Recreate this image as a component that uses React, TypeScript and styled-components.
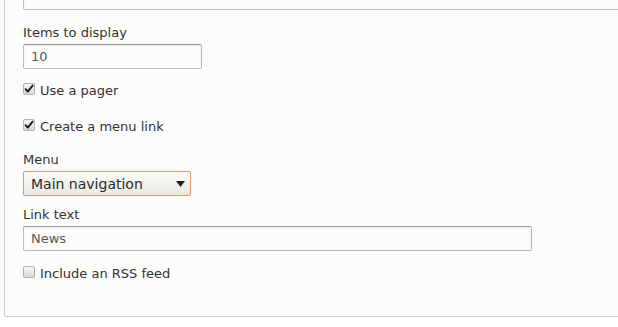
import React from "react";
import styled, { createGlobalStyle } from "styled-components";

const Global = createGlobalStyle`
  html, body { margin: 0; padding: 0; background: #ffffff; overflow: hidden; }
  body { font-family: "DejaVu Sans", Verdana, sans-serif; font-size: 13px; color: #333; }
`;

const Page = styled.div`
  width: 618px;
  height: 327px;
  overflow: hidden;
  padding-left: 4px;
  box-sizing: border-box;
`;

const Fieldset = styled.div`
  margin-top: -40px;
  width: 720px;
  box-sizing: border-box;
  border: 1px solid #cccccc;
  border-radius: 2px;
  background: #fcfcfa;
  padding: 24px 18px 33px 18px;
  display: flex;
  flex-direction: column;
  align-items: flex-start;
`;

const Label = styled.label<{ $mt: number }>`
  display: block;
  margin-top: ${(p) => p.$mt}px;
  line-height: 18px;
  font-size: 13px;
  color: #333;
`;

const TextInput = styled.input<{ $w: number; $mt: number }>`
  box-sizing: border-box;
  width: ${(p) => p.$w}px;
  height: 25px;
  margin: ${(p) => p.$mt}px 0 0 0;
  padding: 0 7px;
  border: 1px solid #b8b8b8;
  border-top-color: #999999;
  border-radius: 2px;
  background: #fcfcfa;
  box-shadow: inset 0 1px 2px rgba(0, 0, 0, 0.08);
  font-family: "DejaVu Sans", Verdana, sans-serif;
  font-size: 13px;
  color: #595959;
  outline: none;
`;

const CheckRow = styled.div<{ $mt: number }>`
  display: flex;
  align-items: flex-start;
  gap: 5px;
  margin-top: ${(p) => p.$mt}px;
  line-height: 18px;
`;

const BoxWrap = styled.span`
  position: relative;
  display: inline-block;
  width: 12px;
  height: 12px;
  margin-top: 1px;
`;

const Box = styled.input`
  appearance: none;
  -webkit-appearance: none;
  margin: 0;
  box-sizing: border-box;
  width: 12px;
  height: 12px;
  border: 1px solid #b4b4b4;
  border-radius: 2px;
  background: linear-gradient(#f4f4f4, #d9d9d9);
  display: block;
`;

const Tick = styled.svg`
  position: absolute;
  left: 1px;
  top: 1px;
  width: 10px;
  height: 10px;
  pointer-events: none;
`;

const CheckText = styled.label`
  font-size: 13px;
  color: #333;
`;

const SelectBox = styled.div`
  box-sizing: border-box;
  margin-top: 2px;
  width: 168px;
  height: 25px;
  border: 1px solid #e39a74;
  border-radius: 2px;
  box-shadow: 0 0 1px 0 rgba(230, 150, 110, 0.5);
  background: linear-gradient(#fbfbf9, #e9e9e1);
  display: flex;
  align-items: center;
  justify-content: space-between;
  padding: 0 5px 0 7px;
  font-size: 14px;
  color: #2a2a2a;
`;

const Arrow = styled.svg`
  width: 9px;
  height: 6px;
  margin-top: 1px;
`;

function Check({ label, checked }: { label: string; checked: boolean }) {
  return (
    <>
      <BoxWrap>
        <Box type="checkbox" defaultChecked={checked} />
        {checked && (
          <Tick viewBox="0 0 10 10">
            <path d="M1.6 5.2 L3.8 7.6 L8.6 1.6" fill="none" stroke="#1a1a1a" strokeWidth="1.9" strokeLinecap="round" strokeLinejoin="round" />
          </Tick>
        )}
      </BoxWrap>
      <CheckText>{label}</CheckText>
    </>
  );
}

export default function App() {
  return (
    <>
      <Global />
      <Page>
        <Fieldset>
          <TextInput $w={680} $mt={0} defaultValue="" />
          <Label $mt={14}>Items to display</Label>
          <TextInput $w={179} $mt={2} defaultValue="10" />
          <CheckRow $mt={13}>
            <Check label="Use a pager" checked />
          </CheckRow>
          <CheckRow $mt={18}>
            <Check label="Create a menu link" checked />
          </CheckRow>
          <Label $mt={15}>Menu</Label>
          <SelectBox>
            <span>Main navigation</span>
            <Arrow viewBox="0 0 9 6">
              <path d="M0 0 H9 L4.5 6 Z" fill="#222" />
            </Arrow>
          </SelectBox>
          <Label $mt={10}>Link text</Label>
          <TextInput $w={509} $mt={2} defaultValue="News" />
          <CheckRow $mt={14}>
            <Check label="Include an RSS feed" checked={false} />
          </CheckRow>
        </Fieldset>
      </Page>
    </>
  );
}
